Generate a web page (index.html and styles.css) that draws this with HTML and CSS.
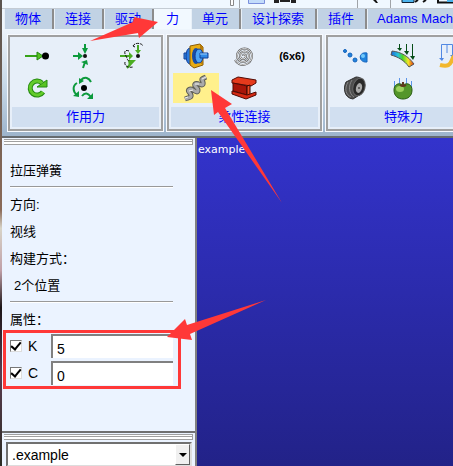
FILE: index.html
```html
<!DOCTYPE html>
<html lang="zh-CN">
<head>
  <meta charset="UTF-8">
  <meta name="viewport" content="width=device-width, initial-scale=1.0">
  <title>Adams View</title>
  <link rel="stylesheet" href="styles.css">
</head>
<body>
  <div class="app">
    <div class="toolbar">
      <svg width="223" height="9" viewBox="0 0 223 9" aria-hidden="true">
        <path d="M0.500 0v5.500h3V0" fill="#fff" stroke="#888"/>
        <path d="M9.500 0v8M127.500 0v8M160.500 0v8" stroke="#a0a4a8"/>
        <path d="M18.500 0v3.500h16V0" fill="#c3dcfb" stroke="#7b8fdc"/>
        <path d="M44 0h5v3h-5zM50 0h10v2H50zM61 0h5v3h-5z" fill="#222"/>
        <path d="M143 0h3l2 3h-2z" fill="#111"/>
        <path d="M172 0v2.500h12V0" fill="#4db4ee" stroke="#123"/>
        <path d="M185 2l3-2M193 2l3-2" stroke="#111" stroke-width="2"/>
        <path d="M208 0v2.500h15" fill="none" stroke="#111" stroke-width="2"/>
        <path d="M217 1h6" stroke="#4db4ee" stroke-width="2"/>
      </svg>
    </div>

    <nav class="tabs">
      <button class="tab">物体</button>
      <button class="tab">连接</button>
      <button class="tab">驱动</button>
      <button class="tab active">力</button>
      <button class="tab">单元</button>
      <button class="tab">设计探索</button>
      <button class="tab">插件</button>
      <button class="tab last">Adams Mach</button>
    </nav>

    <div class="ribbon">
      <section class="group">
        <div class="tools">
          <button class="tool" aria-label="单向力">
            <svg width="28" height="28" viewBox="0 0 28 28">
              <path d="M2 14h13" stroke="#36a318" stroke-width="2"/>
              <path d="M14 10l6 4-6 4z" fill="#58c322" stroke="#248a10"/>
              <circle cx="22.500" cy="14" r="3.500" fill="#000"/>
            </svg>
          </button>
          <button class="tool" aria-label="三分量力">
            <svg width="28" height="28" viewBox="0 0 28 28">
              <path d="M2 14h6M14 2v7M12 26l2-6" stroke="#0c9a3c" stroke-width="2" fill="none"/>
              <path d="M7 10l5 4-5 4zM11 6h6l-3 6zM10 20l6-2 1 5z" fill="#0c9a3c"/>
              <circle cx="14" cy="14" r="2" fill="#111"/>
            </svg>
          </button>
          <button class="tool" aria-label="广义力">
            <svg width="28" height="28" viewBox="0 0 28 28">
              <path d="M1 14h12M19 3v6M8 26l6-7" stroke="#47a824" stroke-width="2" fill="none"/>
              <path d="M10 10l4 4-4 4zM16 8h6l-3 4zM9 18h8l-7 7z" fill="#4cae22"/>
              <path d="M14 4c2-4 9-3 10 0M14 4l2 1M10 9c-5-2-5 2-3 5s1 6 4 4M6 20c-1 4 3 6 8 5" fill="none" stroke="#111" stroke-dasharray="3 1"/>
              <circle cx="19" cy="14" r="2" fill="#111"/>
            </svg>
          </button>
          <button class="tool" aria-label="单向力矩">
            <svg width="28" height="28" viewBox="0 0 28 28">
              <path d="M19 9a7 7 0 1 0 1 9" fill="none" stroke="#248a10" stroke-width="5"/>
              <path d="M14 13h10V6z" fill="#58c322" stroke="#248a10"/>
              <path d="M19 9a7 7 0 1 0 1 9" fill="none" stroke="#63cb2a" stroke-width="3"/>
            </svg>
          </button>
          <button class="tool" aria-label="三分量力矩">
            <svg width="28" height="28" viewBox="0 0 28 28">
              <path d="M10 6c4-4 8-2 10 2M6 9c-5 3-4 9 0 12M11 22c3-4 6-3 9 1" fill="none" stroke="#0c9a3c" stroke-width="2"/>
              <path d="M8 4v6l5-3zM8 17v6l-6-1zM22 19v6h-6z" fill="#0c9a3c"/>
              <circle cx="13" cy="14" r="3" fill="#000"/>
            </svg>
          </button>
        </div>
        <h2 class="caption">作用力</h2>
      </section>

      <section class="group">
        <div class="tools">
          <button class="tool" aria-label="轴套力">
            <svg width="28" height="28" viewBox="0 0 28 28">
              <path d="M2 11h5v6H2z" fill="#318be8" stroke="#123e96"/>
              <ellipse cx="8" cy="14" rx="4" ry="8" fill="#2879df" stroke="#123e96"/>
              <path d="M8 4l10-2 3 3v18l-9 3-4-3z" fill="#e8ac13" stroke="#8a5c05"/>
              <path d="M18 2l3 3v18l-3-2z" fill="#b67b08"/>
              <ellipse cx="14" cy="14" rx="4" ry="8" fill="#174da8"/>
              <ellipse cx="17" cy="14" rx="4" ry="7" fill="#4ba4f5" stroke="#123e96"/>
              <path d="M18 11h8v5h-8z" fill="#318be8" stroke="#123e96"/>
              <path d="M18 12h7" stroke="#9dd2ff"/>
            </svg>
          </button>
          <button class="tool" aria-label="扭转弹簧">
            <svg width="28" height="28" viewBox="0 0 28 28">
              <path d="M13 14a1.500 1.500 0 0 1 3 0a3 3 0 0 1-6 0a4.500 4.500 0 0 1 9 0a6 6 0 0 1-12 0a7.500 7.500 0 0 1 15 0a9 9 0 0 1-17 4" fill="none" stroke="#5c5c5c" stroke-width="2"/>
              <path d="M13 14a1.500 1.500 0 0 1 3 0a3 3 0 0 1-6 0a4.500 4.500 0 0 1 9 0a6 6 0 0 1-12 0a7.500 7.500 0 0 1 15 0a9 9 0 0 1-17 4" fill="none" stroke="#dedede"/>
            </svg>
          </button>
          <button class="tool matrix">(6x6)</button>
          <button class="tool selected" aria-label="拉压弹簧">
            <svg width="28" height="28" viewBox="0 0 28 28">
              <path d="M3 25l3-1c5-1 3-4 1-6s1-4 4-2 5 3 5 0-5-4-3-6 5 1 7 1 1-4 0-5 2-2 4-3" fill="none" stroke="#5d5d55" stroke-width="5"/>
              <path d="M3 25l3-1c5-1 3-4 1-6s1-4 4-2 5 3 5 0-5-4-3-6 5 1 7 1 1-4 0-5 2-2 4-3" fill="none" stroke="#aaa" stroke-width="3"/>
              <path d="M3 24l3-1M7 17l4-1M13 10h4M20 5l4-2" fill="none" stroke="#eee"/>
            </svg>
          </button>
          <button class="tool" aria-label="梁">
            <svg width="28" height="28" viewBox="0 0 28 28">
              <path d="M2 6l6-3 18 3v3l-5 3L2 9z" fill="#e53a1c" stroke="#510a04"/>
              <path d="M3 9l14 3v9L3 17z" fill="#a81509" stroke="#510a04"/>
              <path d="M17 12l3-1v10l-3 1z" fill="#ed4b25" stroke="#350602"/>
              <path d="M2 17l15 4 9-3v3l-10 4L2 20z" fill="#d62a13" stroke="#510a04"/>
            </svg>
          </button>
        </div>
        <h2 class="caption">柔性连接</h2>
      </section>

      <section class="group">
        <div class="tools">
          <button class="tool" aria-label="力场">
            <svg width="28" height="28" viewBox="0 0 28 28">
              <g fill="#2183dd" stroke="#1564bd">
                <circle cx="4" cy="9" r="1.500"/><circle cx="9" cy="13" r="2"/><circle cx="14" cy="18" r="2"/>
                <path d="M26 11c-9-2-9 10 0 9z"/>
              </g>
              <circle cx="22" cy="14" r="2" fill="#72c9fb"/>
            </svg>
          </button>
          <button class="tool" aria-label="模态力">
            <svg width="28" height="28" viewBox="0 0 28 28">
              <defs>
                <linearGradient id="heat">
                  <stop offset="0" stop-color="#1c63d8"/><stop offset=".3" stop-color="#27c4db"/>
                  <stop offset=".5" stop-color="#46d22a"/><stop offset=".75" stop-color="#f4e62a"/>
                  <stop offset="1" stop-color="#dc2410"/>
                </linearGradient>
              </defs>
              <path d="M3 9c9 1 16 5 22 13l-5 3C15 18 9 15 2 13z" fill="url(#heat)" stroke="#555"/>
              <path d="M10.500 2v5M17.500 2v9M23.500 2v14" stroke="#064d17"/>
              <path d="M8 6h5l-2 3zM15 9h5l-2 4zM21 14h5l-2 4z" fill="#064d17"/>
            </svg>
          </button>
          <button class="tool" aria-label="有限元载荷">
            <svg width="28" height="28" viewBox="0 0 28 28">
              <path d="M4.500 17V2.500h11V13M10 2v9" fill="none" stroke="#5188e3"/>
              <path d="M2 16h5l-2 3zM13 13h5l-2 3z" fill="#5188e3"/>
              <path d="M3 23c8 2 10 0 12-5s4-6 12-8" fill="none" stroke="#f2b72c" stroke-width="4"/>
            </svg>
          </button>
          <button class="tool" aria-label="轮胎">
            <svg width="28" height="28" viewBox="0 0 28 28">
              <path d="M5 8L15 3c10 0 11 12 5 17l-8 5C3 24 2 14 5 8z" fill="#4e4e4e" stroke="#303030"/>
              <path d="M7 8c-4 7-2 13 3 15M11 6C7 12 8 20 13 23" fill="none" stroke="#858585"/>
              <ellipse cx="18" cy="13" rx="6" ry="9" transform="rotate(15 18 13)" fill="#292929" stroke="#666"/>
              <ellipse cx="18" cy="14" rx="3" ry="5" transform="rotate(15 18 14)" fill="#aaa"/>
              <circle cx="18" cy="14" r="1" fill="#444"/>
            </svg>
          </button>
          <button class="tool" aria-label="重力">
            <svg width="28" height="28" viewBox="0 0 28 28">
              <path d="M5.500 7v6M10.500 4v7M17.500 4v7M22.500 7v6" stroke="#5c94e8"/>
              <path d="M14 11c5-3 9 0 9 5 0 6-4 9-9 9s-9-3-9-9c0-5 4-8 9-5z" fill="#54962a" stroke="#285b10"/>
              <ellipse cx="11" cy="15" rx="4" ry="3" fill="#9bd15c"/>
              <path d="M14 12V8M11 11q3 2 6 0" fill="none" stroke="#60371d" stroke-width="2"/>
            </svg>
          </button>
        </div>
        <h2 class="caption">特殊力</h2>
      </section>
    </div>

    <div class="workspace">
      <aside class="sidebar">
        <form class="panel">
          <div class="grip"></div>
          <div class="panel-body">
            <h1 class="line title">拉压弹簧</h1>
            <hr>
            <p class="line">方向:</p>
            <p class="line">视线</p>
            <p class="line">构建方式：</p>
            <p class="line indent">2个位置</p>
            <hr>
            <p class="line">属性：</p>
          </div>
          <div class="marked">
            <div class="prop">
              <input type="checkbox" id="use-k" checked>
              <label for="use-k">K</label>
              <input type="text" class="value" value="5" aria-label="K">
            </div>
            <div class="prop">
              <input type="checkbox" id="use-c" checked>
              <label for="use-c">C</label>
              <input type="text" class="value" value="0" aria-label="C">
            </div>
          </div>
        </form>
        <div class="browser">
          <div class="grip"></div>
          <div class="combo">
            <select aria-label="模型">
              <option>.example</option>
            </select>
            <span class="combo-arrow"></span>
          </div>
        </div>
      </aside>
      <main class="view">example</main>
    </div>
  </div>

  <svg class="callouts" width="300" height="350" viewBox="0 0 300 350" aria-hidden="true">
    <path d="M90 41L133 22l1-5 24 5-19 16-1-5z"/>
    <path d="M211 90l21 14-7 4 57 95-64-91-4 3z"/>
    <path d="M266 300l-76 34 2 6-25-3 18-18 2 6z"/>
  </svg>
</body>
</html>
```
FILE: styles.css
```css
* {
  box-sizing: border-box;
}
body {
  margin: 0;
  background: linear-gradient(#5b5550, #8a6a58 45%, #d8d4c8 49%, #c0a0a8 58%, #1c1518 66%, #5a3c50 80%, #2c2c24);
  font-family: "Liberation Sans", "Noto Sans CJK SC", sans-serif;
  font-size: 13px;
  overflow: hidden;
}
button, input, select {
  font: inherit;
}
.app {
  display: flex;
  flex-direction: column;
  height: 100vh;
  margin-left: 2px;
  overflow: hidden;
}

/* top strip and tabs */
.toolbar {
  height: 9px;
  flex: none;
  padding-left: 228px;
  background: #f0f8ff;
  border-bottom: 1px solid #c4ccd4;
}
.toolbar svg {
  display: block;
}
.tabs {
  display: flex;
  flex: none;
  height: 21px;
  padding-left: 2px;
  background: #eef6fd;
}
.tab {
  flex: none;
  height: 20px;
  padding: 0 11px 0 10px;
  border: 0;
  border-right: 2px solid #8c8c8c;
  border-left: 1px solid #e8f0f8;
  background: #c1d2e4;
  color: #0000ff;
  line-height: 20px;
  white-space: nowrap;
}
.tab.active {
  padding: 0 12px;
  border: 0;
  background: #f2f9ff;
}
.tab.last {
  flex: 1 0 auto;
  padding: 0 0 0 9px;
  border-right: 0;
  text-align: left;
}

/* ribbon */
.ribbon {
  display: flex;
  flex: none;
  gap: 4px;
  padding: 5px 0 5px 6px;
  background: linear-gradient(#edf3fa, #c9d9e8 50%, #9db4cc);
  border-bottom: 2px solid #666b70;
}
.group {
  flex: none;
  padding: 2px;
  border: 2px solid #a0a0a0;
  background: #e7eff9;
  outline: 1px solid #f7faff;
}
.tools {
  display: grid;
  grid-template-columns: repeat(3, 46px);
  grid-auto-rows: 30px;
  gap: 2px;
  padding: 2px 3px 4px 2px;
}
.tool {
  display: flex;
  align-items: center;
  justify-content: center;
  padding: 0;
  border: 0;
  background: none;
}
.tool.selected {
  background: #fff08c;
}
.tool.matrix {
  color: #000;
  font-size: 11px;
  font-weight: bold;
}
.caption {
  margin: 0;
  background: #d1dff0;
  color: #0000ff;
  font-size: 13px;
  font-weight: normal;
  line-height: 20px;
  text-align: center;
}

/* left side */
.workspace {
  display: flex;
  flex: 1;
  min-height: 0;
}
.sidebar {
  display: flex;
  flex-direction: column;
  flex: none;
  width: 195px;
  border-right: 2px solid #808080;
  background: #ebf3ff;
  color: #000;
}
.panel {
  padding-bottom: 42px;
  border-bottom: 2px solid #707070;
}
.grip {
  height: 6px;
  margin: 1px 2px 0;
  border: 1px solid #a0a0a0;
  border-width: 1px 1px 1px 0;
  background: linear-gradient(#fff 1px, #a0a0a0 1px, #a0a0a0 2px, #fff 2px);
}
.panel-body {
  padding: 12px 22px 0 8px;
}
.line {
  margin: 0;
  font-size: 13px;
  font-weight: normal;
  line-height: 27px;
}
.indent {
  padding-left: 4px;
}
hr {
  height: 2px;
  margin: 2px 0 3px;
  border: 0;
  border-top: 1px solid #999;
  background: #fff;
}
.marked {
  display: grid;
  grid-template-columns: minmax(0, 1fr);
  gap: 3px;
  width: 178px;
  margin: -3px 0 0 1px;
  padding: 1px 5px 1px 4px;
  border: 3px solid #ff3838;
}
.prop {
  display: flex;
  align-items: center;
}
.prop label {
  flex: none;
  width: 23px;
  margin-left: 6px;
  font-size: 14px;
}
input[type="checkbox"] {
  display: flex;
  flex: none;
  align-items: center;
  justify-content: center;
  appearance: none;
  width: 12px;
  height: 12px;
  margin: 0;
  border: 1px solid #777;
  border-right-color: #ddd;
  border-bottom-color: #ddd;
  background: #fff;
}
input[type="checkbox"]:checked::before {
  content: "";
  width: 4px;
  height: 8px;
  margin-bottom: 2px;
  border: solid #000;
  border-width: 0 2px 2px 0;
  transform: rotate(40deg);
}
.value {
  flex: 1;
  width: 0;
  min-width: 0;
  height: 24px;
  padding: 3px 4px 0;
  border: 2px solid #808080;
  border-right: 0;
  border-bottom: 0;
  border-radius: 0;
  background: #fff;
  font-size: 14px;
}
.browser {
  flex: 1;
}
.combo {
  position: relative;
  margin: 2px 3px 0 4px;
}
.combo select {
  display: block;
  appearance: none;
  width: 100%;
  height: 25px;
  padding: 0 4px;
  border: 2px solid #707070;
  border-right-color: #ddd;
  border-bottom-color: #ddd;
  border-radius: 0;
  background: #fff;
  color: #000;
  font-size: 14px;
}
.combo-arrow {
  display: flex;
  align-items: center;
  justify-content: center;
  position: absolute;
  top: 2px;
  right: 2px;
  bottom: 2px;
  width: 15px;
  border: 1px solid #fff;
  border-right-color: #606060;
  border-bottom-color: #606060;
  background: #f0f0f0;
  pointer-events: none;
}
.combo-arrow::before {
  content: "";
  border: 4px solid transparent;
  border-top-color: #000;
  border-bottom: 0;
}

/* model view */
.view {
  flex: 1;
  min-width: 0;
  padding: 5px 0 0 1px;
  background: linear-gradient(#3333cc, #222288);
  color: #fff;
  font-family: "DejaVu Sans", sans-serif;
  font-size: 11px;
  line-height: 14px;
}

.callouts {
  position: absolute;
  top: 0;
  left: 0;
  fill: #ff3838;
  pointer-events: none;
}
```
